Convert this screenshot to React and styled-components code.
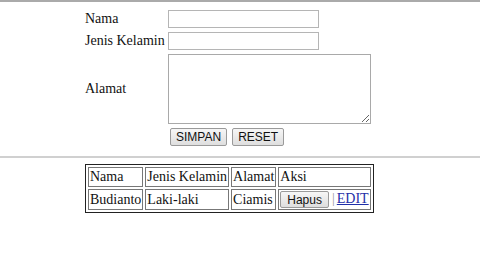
import styled, { createGlobalStyle } from "styled-components";

const GlobalStyle = createGlobalStyle`
  body {
    margin: 0;
    background: #fff;
    font-family: "Liberation Serif", "Times New Roman", serif;
    font-size: 14px;
    color: #111;
  }
`

const Rule = styled.div`
  height: 2px;
  background-color: ${(props) => props.color};
  margin: ${(props) => props.margin};
`

const FormGrid = styled.form`
  display: grid;
  grid-template-columns: 83px auto;
  row-gap: 4px;
  align-items: center;
  margin: 8px 0 0 85px;
  width: max-content;

  label {
    line-height: 16px;
    white-space: nowrap;
  }
`

const TextInput = styled.input`
  box-sizing: border-box;
  width: 151px;
  height: 18px;
  border: 1px solid #b5b5b5;
  padding: 0 2px;
  margin: 0;
  font-size: 13px;
`

const TextArea = styled.textarea`
  box-sizing: border-box;
  width: 203px;
  height: 70px;
  border: 1px solid #a9a9a9;
  margin: 0;
  display: block;
`

const Buttons = styled.div`
  display: flex;
  gap: 5px;
  padding-left: 2px;
`

const Button = styled.button`
  box-sizing: border-box;
  height: ${(props) => props.h || 18}px;
  padding: 0 ${(props) => props.pad || 5}px;
  border: 1px solid #9a9a9a;
  border-radius: 2px;
  background: linear-gradient(#f6f6f6, #dedede);
  font-family: "Liberation Sans", Arial, sans-serif;
  font-size: 12px;
  color: #111;
  line-height: 16px;
  vertical-align: middle;
`

const DataTable = styled.table`
  margin-left: 85px;
  border: 1px solid #222;
  border-spacing: 2px;

  td {
    border: 1px solid #777;
    padding: 1px;
    line-height: 16px;
    white-space: nowrap;
  }
`

const Separator = styled.span`
  color: #999;
  margin: 0 2px 0 3px;
`

const EditLink = styled.a`
  color: #1f2fa8;
  text-decoration: underline;
`

export default function App() {
  return (
    <>
      <GlobalStyle />
      <Rule color="#aaa" margin="0" />

      <FormGrid onSubmit={(e) => e.preventDefault()}>
        <label>Nama</label>
        <TextInput type="text" />

        <label>Jenis Kelamin</label>
        <TextInput type="text" />

        <label>Alamat</label>
        <TextArea />

        <span />
        <Buttons>
          <Button type="submit" pad={5}>SIMPAN</Button>
          <Button type="reset" pad={5}>RESET</Button>
        </Buttons>
      </FormGrid>

      <Rule color="#d0d0d0" margin="10px 0 6px" />

      <DataTable>
        <tbody>
          <tr>
            <td>Nama</td>
            <td>Jenis Kelamin</td>
            <td>Alamat</td>
            <td>Aksi</td>
          </tr>
          <tr>
            <td>Budianto</td>
            <td>Laki-laki</td>
            <td>Ciamis</td>
            <td>
              <Button pad={6} h={17}>Hapus</Button>
              <Separator>|</Separator>
              <EditLink href="#">EDIT</EditLink>
            </td>
          </tr>
        </tbody>
      </DataTable>
    </>
  );
}
